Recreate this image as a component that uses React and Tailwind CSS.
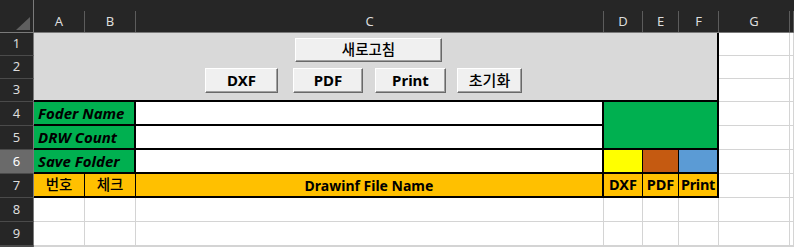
import React from "react";

const GL = "border-r border-b border-[#d4d4d4] bg-white";

function RowHead({ n, active }) {
  return (
    <div
      className={`flex items-center justify-center border-r border-b border-r-[#7a7a7a] border-b-[#4a4a4a] text-[13px] text-[#dcdcdc] ${
        active ? "bg-[#6a6a6a] text-white" : "bg-[#262626]"
      }`}
    >
      {n}
    </div>
  );
}

function ColHead({ label }) {
  return (
    <div className="flex items-end bg-[#262626] border-b border-[#7a7a7a]">
      <div className="h-[21px] w-full border-r border-[#5c5c5c] flex items-center justify-center text-[13px] text-[#dcdcdc]">
        {label}
      </div>
    </div>
  );
}

function Btn({ children, className }) {
  return (
    <div
      className={`flex items-center justify-center bg-[#f0f0f0] border border-t-white border-l-white border-r-[#696969] border-b-[#696969] shadow-[inset_-1px_-1px_0_#a0a0a0] text-black ${className}`}
    >
      {children}
    </div>
  );
}

function Label({ children }) {
  return (
    <div className="col-span-2 bg-[#00b050] border-r-2 border-b-2 border-black flex items-center pl-[4px] text-[15px] font-bold italic text-black whitespace-nowrap">
      {children}
    </div>
  );
}

function EmptyRow({ n }) {
  return (
    <>
      <RowHead n={n} />
      <div className={GL} />
      <div className={GL} />
      <div className={GL} />
      <div className={GL} />
      <div className={GL} />
      <div className={GL} />
      <div className={GL} />
      <div className={GL} />
    </>
  );
}

export default function App() {
  return (
    <div className="w-[794px] h-[247px] overflow-hidden bg-white font-['Noto_Sans','Noto_Sans_CJK_KR',sans-serif]">
      <div className="relative grid grid-cols-[34px_51px_51px_468px_39px_36px_40px_71px_1fr] grid-rows-[33px_23px_23px_23px_24px_24px_24px_24px_24px_24px]">
        {/* header row */}
        <div className="relative bg-[#262626] border-r border-b border-r-[#7a7a7a] border-b-[#7a7a7a]">
          <svg className="absolute left-[16px] top-[17px]" width="14" height="13" viewBox="0 0 14 13">
            <polygon points="14,0 14,13 0,13" fill="#5f5f5f" />
          </svg>
        </div>
        <ColHead label="A" />
        <ColHead label="B" />
        <ColHead label="C" />
        <ColHead label="D" />
        <ColHead label="E" />
        <ColHead label="F" />
        <ColHead label="G" />
        <ColHead label="" />

        {/* row 1 */}
        <RowHead n={1} />
        <div className="col-span-6 row-span-3 bg-[#d9d9d9] border-r-2 border-b-2 border-black flex flex-col pt-[5px]">
          <Btn className="ml-[261px] w-[147px] h-[24px] text-[14.5px] font-medium">
            새로고침
          </Btn>
          <div className="flex mt-[6px]">
            <Btn className="ml-[171px] w-[73px] h-[25px] text-[15px] font-bold">DXF</Btn>
            <Btn className="ml-[15px] w-[70px] h-[25px] text-[15px] font-bold">PDF</Btn>
            <Btn className="ml-[12px] w-[71px] h-[25px] text-[15px] font-bold">Print</Btn>
            <Btn className="ml-[11px] w-[65px] h-[25px] text-[15px] font-medium">초기화</Btn>
          </div>
        </div>
        <div className={GL} />
        <div className={GL} />

        {/* row 2 */}
        <RowHead n={2} />
        <div className={GL} />
        <div className={GL} />

        {/* row 3 */}
        <RowHead n={3} />
        <div className={GL} />
        <div className={GL} />

        {/* row 4 */}
        <RowHead n={4} />
        <Label>Foder Name</Label>
        <div className="bg-white border-r-2 border-b-2 border-black" />
        <div className="col-span-3 row-span-2 bg-[#00b050] border-r-2 border-b-2 border-black" />
        <div className={GL} />
        <div className={GL} />

        {/* row 5 */}
        <RowHead n={5} />
        <Label>DRW Count</Label>
        <div className="bg-white border-r-2 border-b-2 border-black" />
        <div className={GL} />
        <div className={GL} />

        {/* row 6 */}
        <RowHead n={6} active />
        <Label>Save Folder</Label>
        <div className="bg-white border-r-2 border-b-2 border-black" />
        <div className="bg-[#ffff00] border-r border-b-2 border-black" />
        <div className="bg-[#c55a11] border-r border-b-2 border-black" />
        <div className="bg-[#5b9bd5] border-r-2 border-b-2 border-black" />
        <div className={GL} />
        <div className={GL} />

        {/* row 7 */}
        <RowHead n={7} />
        <div className="bg-[#ffc000] border-r border-b-2 border-black flex items-center justify-center text-[14.5px] font-medium text-black">
          번호
        </div>
        <div className="bg-[#ffc000] border-r border-b-2 border-black flex items-center justify-center text-[14.5px] font-medium text-black">
          체크
        </div>
        <div className="bg-[#ffc000] border-r-2 border-b-2 border-black flex items-center justify-center text-[14px] font-bold text-black">
          Drawinf File Name
        </div>
        <div className="bg-[#ffc000] border-r border-b-2 border-black flex items-center justify-center text-[14.5px] font-bold text-black">
          DXF
        </div>
        <div className="bg-[#ffc000] border-r border-b-2 border-black flex items-center justify-center text-[14.5px] font-bold text-black">
          PDF
        </div>
        <div className="bg-[#ffc000] border-r-2 border-b-2 border-black flex items-center justify-center text-[14.5px] font-bold text-black tracking-[-0.3px]">
          Print
        </div>
        <div className={GL} />
        <div className={GL} />

        <EmptyRow n={8} />
        <EmptyRow n={9} />
        <EmptyRow n="" />
      </div>
    </div>
  );
}
